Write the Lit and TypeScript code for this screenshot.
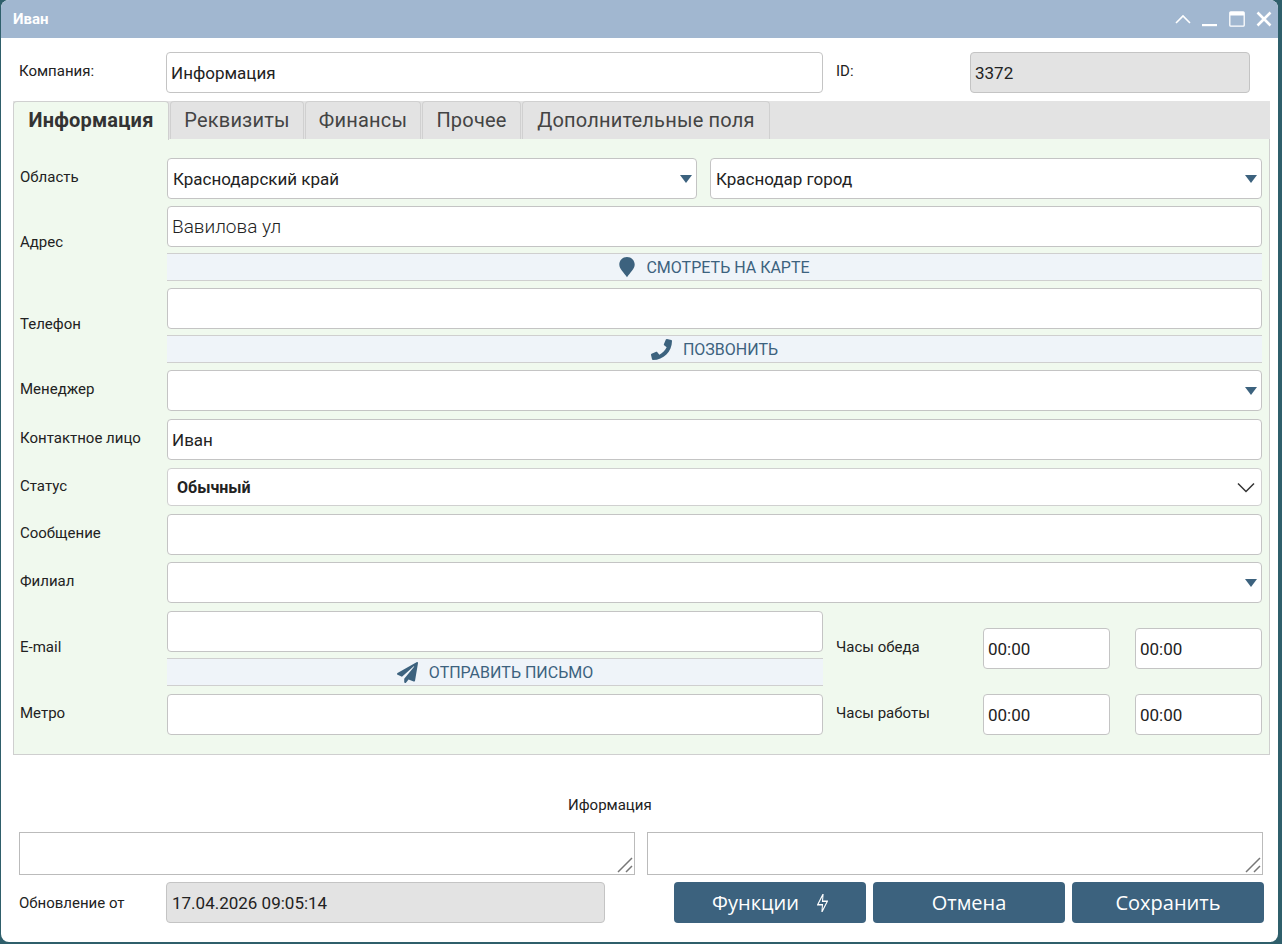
import { LitElement, css, html, svg } from 'lit'
import { customElement } from 'lit/decorators.js'

const pin = svg`<path d="M8 0C3.6 0 .3 3.4.3 7.6c0 4.6 4.6 8 7.7 12.7 3.1-4.7 7.7-8.1 7.7-12.7C15.700 3.400 12.400 0 8 0z"/>`
const phone = svg`<path d="M493.4 24.6l-104-24c-11.3-2.6-22.9 3.3-27.500 13.900l-48 112c-4.200 9.800-1.400 21.300 6.900 28l60.600 49.600c-36 76.700-98.900 140.500-177.200 177.200l-49.600-60.600c-6.800-8.300-18.200-11.100-28-6.900l-112 48C3.900 366.500-2 378.100.6 389.400l24 104C27.100 504.200 36.700 512 48 512c256.100 0 464-207.500 464-464 0-11.200-7.700-20.900-18.600-23.400z"/>`
const plane = svg`<path d="M476 3.200L12.500 270.600c-18.100 10.400-15.800 35.600 2.200 43.200L121 358.400l287.300-253.200c5.500-4.900 13.300 2.600 8.600 8.300L176 407v80.500c0 23.600 28.500 32.900 42.500 15.800L282 426l124.600 52.200c14.200 6 30.400-2.900 33-18.200l72-432C515 7.800 493.300-6.800 476 3.200z"/>`

@customElement('app-root')
export class AppRoot extends LitElement {
  tabs = ['Информация', 'Реквизиты', 'Финансы', 'Прочее', 'Дополнительные поля']

  selectField(value: string, extra = '') {
    return html`
      <div class="select ${extra}">
        <input class="field" .value=${value} readonly />
        <span class="arrow"></span>
      </div>
    `
  }

  actionButton(icon: unknown, box: string, w: number, h: number, label: string) {
    return html`
      <div class="action">
        <svg viewBox=${box} width=${w} height=${h} fill="#3c627e">${icon}</svg>
        <span>${label}</span>
      </div>
    `
  }

  grip() {
    return html`
      <svg class="grip" viewBox="0 0 16 16" width="16" height="16" stroke="#777" stroke-width="1.500" fill="none">
        <path d="M1 15L15 1M9 15l6-6" />
      </svg>
    `
  }

  render() {
    return html`
      <div class="win">
        <header class="title">
          <span>Иван</span>
          <div class="controls">
            <svg viewBox="0 0 16 10" width="16" height="10" stroke="#fff" stroke-width="1.600" fill="none"><path d="M1 9l7-7 7 7" /></svg>
            <svg class="min" viewBox="0 0 16 4" width="16" height="4" fill="#fff"><rect y="1" width="15" height="2.200" /></svg>
            <svg viewBox="0 0 16 16" width="16" height="16" stroke="#fff" fill="none"><rect x=".8" y=".8" width="14.400" height="14.400" rx="1" stroke-width="1.300" /><rect x="1" y="1" width="14" height="3.500" fill="#fff" stroke="none" /></svg>
            <svg viewBox="0 0 16 16" width="16" height="16" stroke="#fff" stroke-width="2.600" fill="none"><path d="M1.500 1.500l13 13M14.500 1.500l-13 13" /></svg>
          </div>
        </header>

        <div class="company">
          <label>Компания:</label>
          <input class="field" value="Информация" />
          <label class="gap-left">ID:</label>
          <input class="field ro num" value="3372" readonly />
        </div>

        <nav class="tabs">
          ${this.tabs.map((t, i) => html`<div class="tab t${i} ${i === 0 ? 'active' : ''}">${t}</div>`)}
        </nav>

        <section class="panel">
          <div class="row">
            <label>Область</label>
            <div class="two">
              ${this.selectField('Краснодарский край')}
              ${this.selectField('Краснодар город')}
            </div>
          </div>
          <div class="row">
            <label>Адрес</label>
            <div class="stack">
              <input class="field big" value="Вавилова ул" />
              ${this.actionButton(pin, '0 0 16 21', 16, 21, 'Смотреть на карте')}
            </div>
          </div>
          <div class="row">
            <label>Телефон</label>
            <div class="stack">
              <input class="field" />
              ${this.actionButton(phone, '0 0 512 512', 21, 21, 'Позвонить')}
            </div>
          </div>
          <div class="row"><label>Менеджер</label>${this.selectField('')}</div>
          <div class="row mt"><label>Контактное лицо</label><input class="field" value="Иван" /></div>
          <div class="row mt">
            <label>Статус</label>
            <div class="status">
              <b>Обычный</b>
              <svg viewBox="0 0 18 11" width="18" height="11" stroke="#333" stroke-width="1.500" fill="none"><path d="M1 1.500l8 8 8-8" /></svg>
            </div>
          </div>
          <div class="row mt"><label>Сообщение</label><input class="field" /></div>
          <div class="row"><label>Филиал</label>${this.selectField('')}</div>
          <div class="row wide mt">
            <label>E-mail</label>
            <div class="stack">
              <input class="field" />
              ${this.actionButton(plane, '0 0 512 512', 21, 21, 'Отправить письмо')}
            </div>
            <label>Часы обеда</label>
            <input class="field" value="00:00" />
            <input class="field" value="00:00" />
          </div>
          <div class="row wide mt">
            <label>Метро</label>
            <input class="field" />
            <label>Часы работы</label>
            <input class="field" value="00:00" />
            <input class="field" value="00:00" />
          </div>
        </section>

        <div class="info-title">Иформация</div>

        <div class="notes">
          <div class="note"><textarea></textarea>${this.grip()}</div>
          <div class="note"><textarea></textarea>${this.grip()}</div>
        </div>

        <footer class="bottom">
          <label>Обновление от</label>
          <input class="field ro date" value="17.04.2026 09:05:14" readonly />
          <div class="buttons">
            <button>
              Функции
              <svg viewBox="3 2 18 20" width="11" height="18" preserveAspectRatio="none" stroke="#fff" stroke-width="1.700" fill="none"><path d="M13 2L4 14h8l-1 8 9-12h-8l1-8z" /></svg>
            </button>
            <button>Отмена</button>
            <button>Сохранить</button>
          </div>
        </footer>
      </div>
    `
  }

  static styles = css`
    :host {
      display: block;
      height: 944px;
      background: #2f5f6b;
      font-family: Roboto, 'Liberation Sans', sans-serif;
      color: #222;
      overflow: hidden;
    }
    * {
      box-sizing: border-box;
    }
    .win {
      width: 1277px;
      height: 942px;
      margin-left: 1px;
      background: #fff;
      border-radius: 8px;
      overflow: hidden;
    }
    .title {
      height: 38px;
      background: #a1b7d0;
      color: #fff;
      font-size: 15px;
      font-weight: 700;
      display: flex;
      align-items: center;
      justify-content: space-between;
      padding: 0 6px 0 12px;
    }
    .controls {
      display: flex;
      align-items: center;
      gap: 11px;
    }
    .controls .min {
      margin-top: 12px;
    }
    label {
      font-size: 15px;
      color: #222;
    }
    .field {
      width: 100%;
      height: 41px;
      min-width: 0;
      border: 1px solid #c4c4c4;
      border-radius: 4px;
      background: #fff;
      padding: 0 4px;
      font: 400 17px Roboto, sans-serif;
      color: #222;
      outline: none;
    }
    .field.big {
      font-size: 19px;
      font-weight: 300;
    }
    .field.ro {
      background: #e3e3e3;
    }
    .company {
      display: grid;
      grid-template-columns: 147px 657px 147px 280px;
      align-items: center;
      margin: 14px 0 0 18px;
    }
    .company label {
      margin-top: -3px;
    }
    .company .gap-left {
      margin-left: 13px;
    }
    .tabs {
      display: flex;
      gap: 1px;
      width: 1257px;
      height: 38px;
      margin: 8px 0 0 12px;
      background: #e3e3e3;
    }
    .tab {
      font-size: 20px;
      line-height: 37px;
      color: #444;
      text-align: center;
      border: 1px solid #d0d0d0;
      border-bottom: 0;
      border-radius: 4px 4px 0 0;
      letter-spacing: 0.2px;
    }
    .t0 { width: 156px; }
    .t1 { width: 134px; }
    .t2 { width: 116px; }
    .t3 { width: 99px; }
    .t4 { width: 248px; }
    .tab.active {
      background: #f0f9ee;
      font-weight: 700;
      color: #333;
      height: 39px;
      position: relative;
    }
    .panel {
      width: 1257px;
      height: 616px;
      margin-left: 12px;
      background: #f0f9ee;
      border: 1px solid #cfcfcf;
      border-top: 0;
      padding: 19px 7px 0 6px;
      display: flex;
      flex-direction: column;
      gap: 7px;
    }
    .row {
      display: grid;
      grid-template-columns: 147px 1095px;
      align-items: center;
    }
    .row > label {
      margin-top: -3px;
    }
    .row.mt {
      margin-top: 1px;
    }
    .row.wide {
      grid-template-columns: 147px 656px 160px 127px 127px;
      column-gap: 0;
    }
    .row.wide > label:nth-of-type(2) {
      margin-left: 13px;
    }
    .row.wide > input:last-child {
      justify-self: end;
    }
    .row.wide {
      grid-template-columns: 147px 656px 160px 127px 152px;
    }
    .row.wide > input:last-child {
      width: 127px;
    }
    .two {
      display: grid;
      grid-template-columns: 530px 552px;
      gap: 13px;
    }
    .select {
      position: relative;
    }
    .select .field {
      padding-left: 5px;
    }
    .arrow {
      position: absolute;
      right: 5px;
      top: 17px;
      width: 0;
      height: 0;
      border-left: 6px solid transparent;
      border-right: 6px solid transparent;
      border-top: 8px solid #3c627e;
    }
    .stack {
      display: flex;
      flex-direction: column;
      gap: 6px;
    }
    .action {
      height: 28px;
      background: #eff4f9;
      border-top: 1px solid #cfcfcf;
      border-bottom: 1px solid #cfcfcf;
      color: #3c627e;
      font-size: 16px;
      text-transform: uppercase;
      display: flex;
      align-items: center;
      justify-content: center;
      gap: 11px;
    }
    .status {
      height: 38px;
      background: #fff;
      border: 1px solid #d0d0d0;
      border-radius: 4px;
      padding: 0 6px 0 9px;
      display: flex;
      align-items: center;
      justify-content: space-between;
      font-size: 16px;
    }
    .info-title {
      margin: 41px 0 0 0;
      padding-left: 567px;
      font-size: 15px;
      line-height: 18px;
      color: #222;
    }
    .notes {
      display: grid;
      grid-template-columns: 616px 616px;
      gap: 12px;
      margin: 18px 0 0 18px;
    }
    .note {
      position: relative;
      height: 43px;
    }
    .note textarea {
      display: block;
      width: 100%;
      height: 100%;
      border: 1px solid #bbb;
      background: #fff;
      resize: none;
      outline: none;
    }
    .grip {
      position: absolute;
      right: 2px;
      bottom: 2px;
    }
    .bottom {
      display: grid;
      grid-template-columns: 147px 439px 1fr;
      align-items: center;
      margin: 7px 14px 0 18px;
    }
    .bottom .date {
      padding-left: 5px;
      font-size: 17px;
    }
    .buttons {
      display: grid;
      grid-template-columns: 192px 192px 192px;
      column-gap: 7px;
      margin-left: 69px;
    }
    button {
      height: 41px;
      border: 0;
      border-radius: 4px;
      background: #3c627e;
      color: #fff;
      font: 500 20px 'Open Sans', sans-serif;
      display: flex;
      align-items: center;
      justify-content: center;
      gap: 18px;
      padding: 0;
    }
  `
}

declare global {
  interface HTMLElementTagNameMap {
    'app-root': AppRoot
  }
}
